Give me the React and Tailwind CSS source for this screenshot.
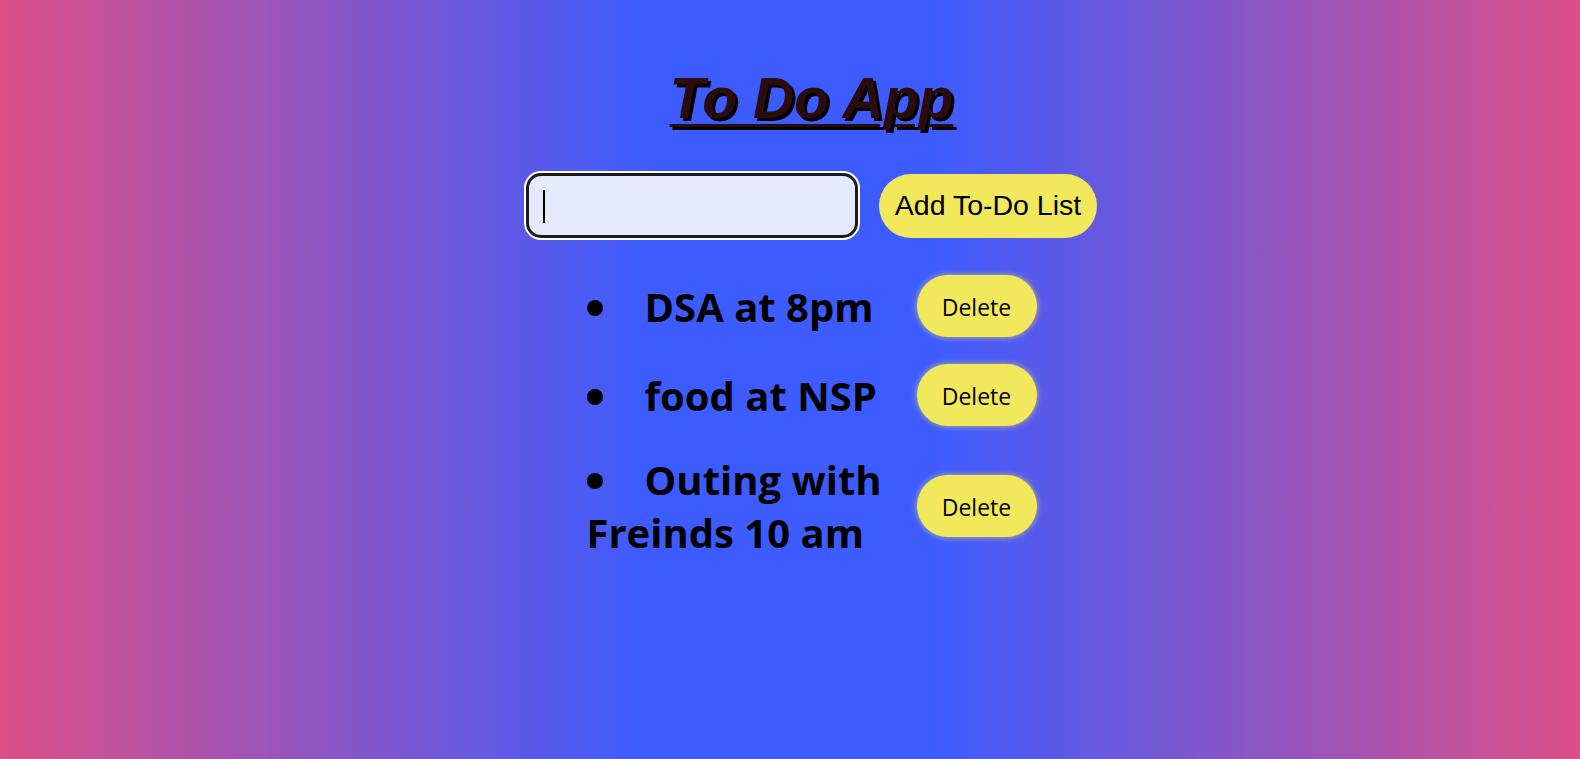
import React from 'react';

const todos = ['DSA at 8pm', 'food at NSP', 'Outing with Freinds 10 am'];

export default function App() {
  return (
    <div className="min-h-screen w-full bg-[linear-gradient(to_right,#dd4f87_0%,#3d5cff_41%,#3d5cff_59%,#dd4f87_100%)]">
      <div className="flex flex-col items-center pt-[66px] pl-[43px]">
        {/* Title */}
        <h1 className="font-['Liberation_Sans',Arial,sans-serif] text-[57px] font-bold italic leading-[64px] text-[#2a0b0e] underline decoration-[3px] underline-offset-[6px] [text-shadow:3px_3px_0_#000]">
          To Do App
        </h1>

        {/* Input row */}
        <div className="mt-[43px] flex items-center gap-[21px]">
          <div className="relative">
            <input
              type="text"
              className="h-[65px] w-[332px] rounded-[15px] border-[3px] border-[#1b1b1f] bg-[#e6e9fb] px-[14px] text-[26px] outline-none shadow-[0_0_0_2px_#ffffff]"
            />
            <span className="absolute left-[17px] top-[17px] h-[33px] w-[2px] bg-black" />
          </div>
          <button className="h-[64px] rounded-full bg-[#f2e85c] px-[16px] font-['Liberation_Sans',Arial,sans-serif] text-[28.5px] text-black">
            Add To-Do List
          </button>
        </div>

        {/* List */}
        <ul className="mt-[37px] flex flex-col gap-[27px]">
          {todos.map((t) => (
            <li key={t} className="flex items-center gap-[20px]">
              <span className="w-[310px] font-['Segoe_UI','Open_Sans',sans-serif] text-[40px] font-bold leading-[53px] text-black">
                <span className="mr-[42px] mb-[6px] inline-block h-[16px] w-[16px] rounded-full bg-black align-baseline" />
                {t}
              </span>
              <button className="h-[62px] w-[120px] rounded-full bg-[#f2e85c] pt-[2px] font-['Segoe_UI','Open_Sans',sans-serif] text-[23px] text-black shadow-[0_0_6px_rgba(242,232,92,0.7)]">
                Delete
              </button>
            </li>
          ))}
        </ul>
      </div>
    </div>
  );
}
